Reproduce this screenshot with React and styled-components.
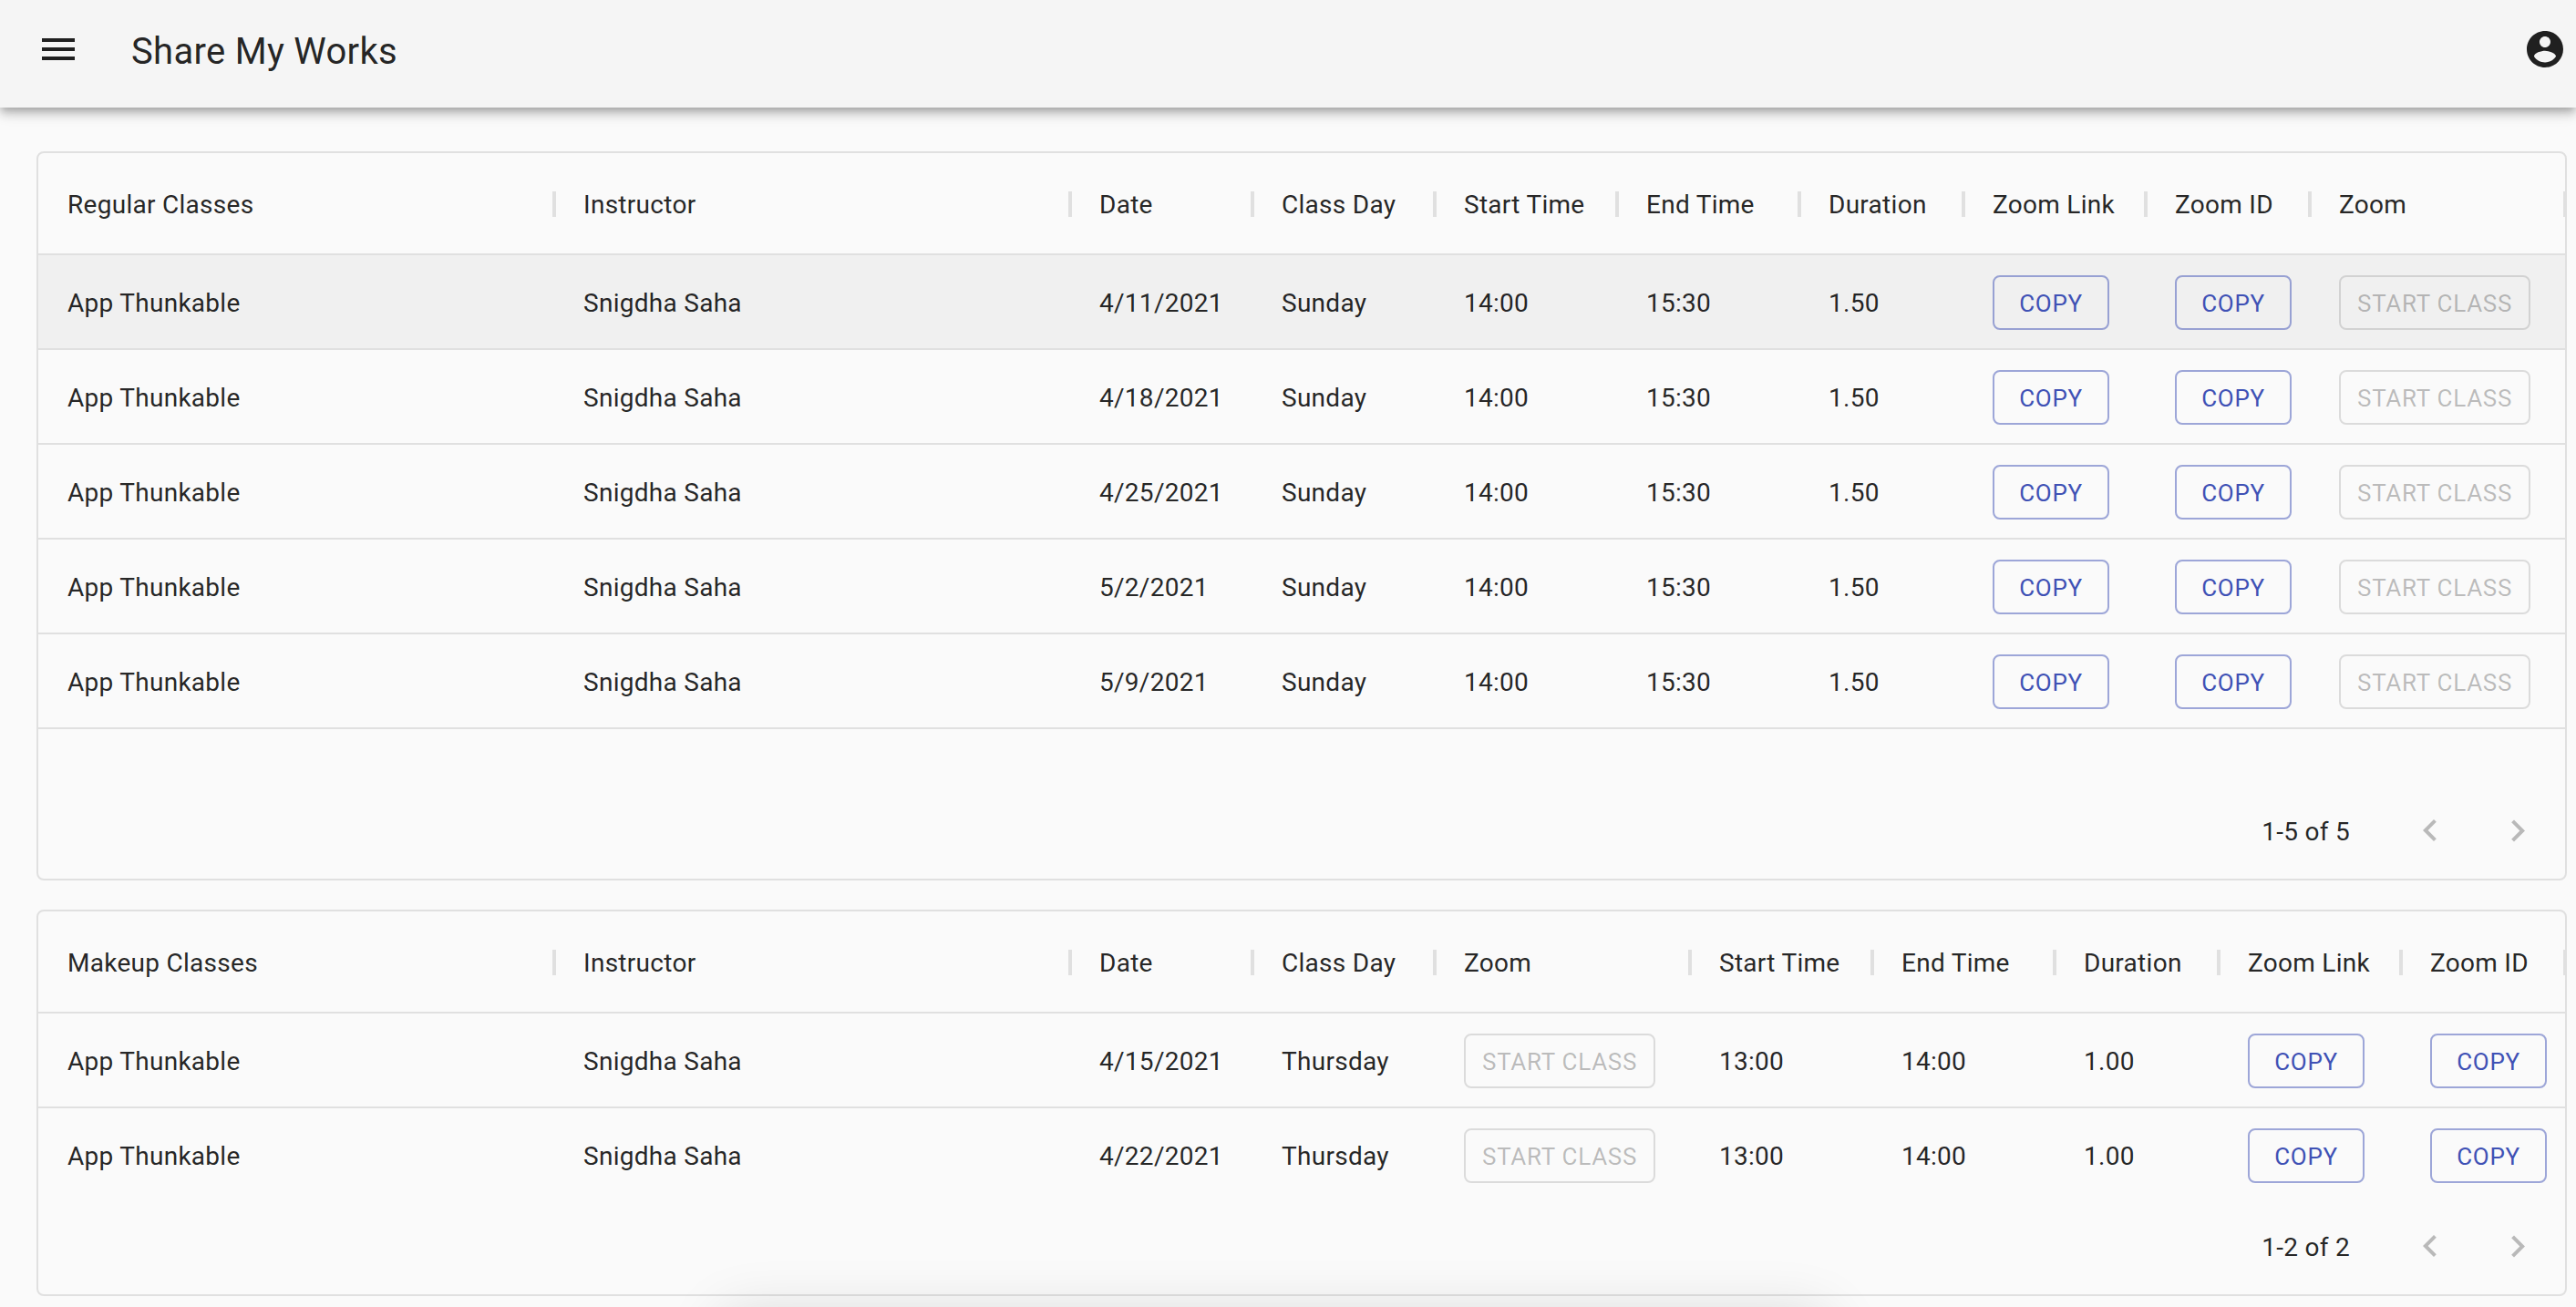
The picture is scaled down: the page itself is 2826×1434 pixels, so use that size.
import React from "react";
import styled, { createGlobalStyle } from "styled-components";

const GlobalStyle = createGlobalStyle`
  * {
    box-sizing: border-box;
  }

  body {
    margin: 0;
    background: #fafafa;
    color: rgba(0, 0, 0, 0.87);
    font-family: Roboto, "Liberation Sans", sans-serif;
    font-size: 28px;
    line-height: 40px;
    -webkit-font-smoothing: antialiased;
  }
`;

const AppBar = styled.header`
  position: relative;
  z-index: 1;
  display: flex;
  align-items: center;
  gap: 32px;
  height: 118px;
  padding: 0 10px 10px 16px;
  background: #f5f5f5;
  box-shadow:
    0 4px 8px -2px rgba(0, 0, 0, 0.2),
    0 8px 10px 0 rgba(0, 0, 0, 0.14),
    0 2px 20px 0 rgba(0, 0, 0, 0.12);
`;

const IconButton = styled.button`
  display: flex;
  padding: ${(p) => (p.$flush ? "24px 0" : "24px")};
  border: 0;
  background: none;
  color: inherit;
  cursor: pointer;

  &:disabled {
    color: rgba(0, 0, 0, 0.26);
    cursor: default;
  }
`;

const Icon = styled.svg`
  width: 48px;
  height: 48px;
  fill: currentColor;
`;

const Title = styled.h1`
  flex: 1;
  margin: 0;
  padding-top: 6px;
  font-size: 40px;
  font-weight: 400;
  line-height: 64px;
  letter-spacing: 0.0075em;
`;

const Page = styled.main`
  display: flex;
  flex-direction: column;
  gap: 32px;
  padding: 48px 10px 12px 40px;
`;

const Panel = styled.section`
  overflow: hidden;
  border: 2px solid #e0e0e0;
  border-radius: 8px;
`;

const GridArea = styled.div`
  padding-bottom: ${(p) => (p.$roomy ? "64px" : "0")};
`;

const Grid = styled.table`
  width: 100%;
  table-layout: fixed;
  border-collapse: separate;
  border-spacing: 0;
  letter-spacing: 0.01em;
`;

const Column = styled.col`
  width: ${(p) => (p.$width ? `${p.$width}px` : "auto")};
`;

const HeadCell = styled.th`
  position: relative;
  height: 112px;
  padding: 4px 0 0 32px;
  border-bottom: 2px solid #e0e0e0;
  font-weight: 400;
  text-align: left;
  white-space: nowrap;

  &::after {
    content: "";
    position: absolute;
    top: 42px;
    right: -2px;
    width: 4px;
    height: 28px;
    background: #e0e0e0;
  }
`;

const Cell = styled.td`
  height: 104px;
  padding: ${(p) => (p.$action ? "2px" : "4px")} 0 0 32px;
  border-bottom: 2px solid #e0e0e0;
  white-space: nowrap;
`;

const Row = styled.tr`
  background: ${(p) => (p.$active ? "rgba(0, 0, 0, 0.04)" : "transparent")};

  &:last-child > td {
    border-bottom-color: ${(p) => (p.$closed ? "#e0e0e0" : "transparent")};
  }
`;

const ActionButton = styled.button`
  display: block;
  min-width: 128px;
  height: 60px;
  padding: 2px 18px 0;
  border: 2px solid rgba(63, 81, 181, 0.5);
  border-radius: 8px;
  background: none;
  color: #3f51b5;
  font-family: inherit;
  font-size: 26px;
  font-weight: 400;
  line-height: 44px;
  letter-spacing: 0.027em;
  text-transform: uppercase;
  cursor: pointer;

  &:disabled {
    border-color: rgba(0, 0, 0, 0.12);
    color: rgba(0, 0, 0, 0.26);
    cursor: default;
  }
`;

const Footer = styled.footer`
  display: flex;
  align-items: center;
  justify-content: flex-end;
  height: 100px;
  padding: 0 4px 4px 0;
`;

const RangeLabel = styled.p`
  margin: 0 40px 0 0;
  padding-top: 2px;
  letter-spacing: 0.01em;
`;

const BottomShade = styled.div`
  position: fixed;
  right: 29%;
  bottom: -208px;
  left: 28%;
  height: 200px;
  border-radius: 16px;
  box-shadow: 0 0 64px rgba(0, 0, 0, 0.14);
  pointer-events: none;
`;

const REGULAR_COLUMNS = [
  { key: "title", label: "Regular Classes" },
  { key: "instructor", label: "Instructor" },
  { key: "date", label: "Date", width: 200 },
  { key: "day", label: "Class Day", width: 200 },
  { key: "start", label: "Start Time", width: 200 },
  { key: "end", label: "End Time", width: 200 },
  { key: "duration", label: "Duration", width: 180 },
  { key: "link", label: "Zoom Link", width: 200, action: "Copy" },
  { key: "id", label: "Zoom ID", width: 180, action: "Copy" },
  { key: "zoom", label: "Zoom", width: 280, action: "Start Class", disabled: true },
];

const MAKEUP_COLUMNS = [
  { key: "title", label: "Makeup Classes" },
  { key: "instructor", label: "Instructor" },
  { key: "date", label: "Date", width: 200 },
  { key: "day", label: "Class Day", width: 200 },
  { key: "zoom", label: "Zoom", width: 280, action: "Start Class", disabled: true },
  { key: "start", label: "Start Time", width: 200 },
  { key: "end", label: "End Time", width: 200 },
  { key: "duration", label: "Duration", width: 180 },
  { key: "link", label: "Zoom Link", width: 200, action: "Copy" },
  { key: "id", label: "Zoom ID", width: 180, action: "Copy" },
];

const lesson = (date, day, start, end, duration) => ({
  title: "App Thunkable",
  instructor: "Snigdha Saha",
  date,
  day,
  start,
  end,
  duration,
});

const REGULAR_ROWS = ["4/11/2021", "4/18/2021", "4/25/2021", "5/2/2021", "5/9/2021"].map(
  (date) => lesson(date, "Sunday", "14:00", "15:30", "1.50")
);

const MAKEUP_ROWS = ["4/15/2021", "4/22/2021"].map((date) =>
  lesson(date, "Thursday", "13:00", "14:00", "1.00")
);

function ClassTable({ columns, rows, activeRow, roomy }) {
  return (
    <Panel>
      <GridArea $roomy={roomy}>
        <Grid>
          <colgroup>
            {columns.map((c) => (
              <Column key={c.key} $width={c.width} />
            ))}
          </colgroup>
          <thead>
            <tr>
              {columns.map((c) => (
                <HeadCell key={c.key} scope="col">
                  {c.label}
                </HeadCell>
              ))}
            </tr>
          </thead>
          <tbody>
            {rows.map((row, i) => (
              <Row key={row.date} $active={i === activeRow} $closed={roomy}>
                {columns.map((c) => (
                  <Cell key={c.key} $action={Boolean(c.action)}>
                    {c.action ? (
                      <ActionButton type="button" disabled={c.disabled}>
                        {c.action}
                      </ActionButton>
                    ) : (
                      row[c.key]
                    )}
                  </Cell>
                ))}
              </Row>
            ))}
          </tbody>
        </Grid>
      </GridArea>
      <Footer>
        <RangeLabel>{`1-${rows.length} of ${rows.length}`}</RangeLabel>
        <IconButton type="button" aria-label="Previous page" disabled>
          <Icon viewBox="0 0 24 24" aria-hidden="true">
            <path d="M15.41 16.09l-4.58-4.59 4.58-4.59L14 5.5l-6 6 6 6z" />
          </Icon>
        </IconButton>
        <IconButton type="button" aria-label="Next page" disabled>
          <Icon viewBox="0 0 24 24" aria-hidden="true">
            <path d="M8.59 16.34l4.58-4.59-4.58-4.59L10 5.75l6 6-6 6z" />
          </Icon>
        </IconButton>
      </Footer>
    </Panel>
  );
}

export default function App() {
  return (
    <>
      <GlobalStyle />
      <AppBar>
        <IconButton type="button" aria-label="Open menu">
          <Icon viewBox="0 0 24 24" aria-hidden="true">
            <path d="M3 18h18v-2H3v2zm0-5h18v-2H3v2zm0-7v2h18V6H3z" />
          </Icon>
        </IconButton>
        <Title>Share My Works</Title>
        <IconButton type="button" aria-label="Account" $flush>
          <Icon viewBox="0 0 24 24" aria-hidden="true">
            <path d="M12 2C6.48 2 2 6.48 2 12s4.48 10 10 10 10-4.48 10-10S17.52 2 12 2zm0 3c1.66 0 3 1.34 3 3s-1.34 3-3 3-3-1.34-3-3 1.34-3 3-3zm0 14.2c-2.5 0-4.71-1.28-6-3.22.03-1.99 4-3.08 6-3.08 1.99 0 5.97 1.09 6 3.08-1.29 1.94-3.5 3.22-6 3.22z" />
          </Icon>
        </IconButton>
      </AppBar>
      <Page>
        <ClassTable columns={REGULAR_COLUMNS} rows={REGULAR_ROWS} activeRow={0} roomy />
        <ClassTable columns={MAKEUP_COLUMNS} rows={MAKEUP_ROWS} />
      </Page>
      <BottomShade />
    </>
  );
}
